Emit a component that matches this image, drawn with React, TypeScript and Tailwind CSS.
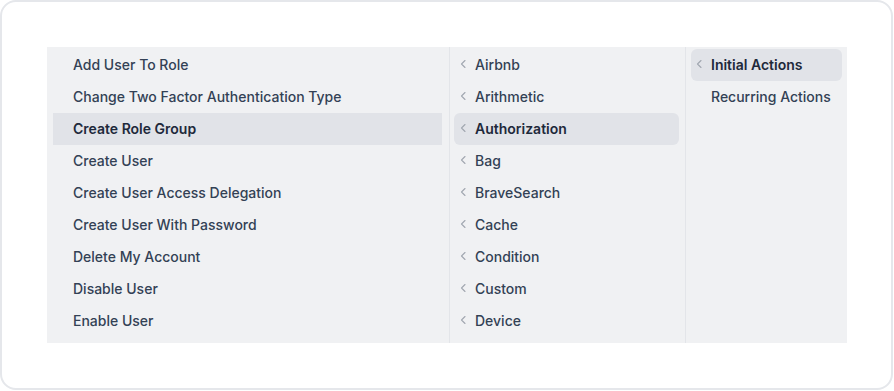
// Cascading action picker: three columns of menu items

const groups = [
  'Add User To Role',
  'Change Two Factor Authentication Type',
  'Create Role Group',
  'Create User',
  'Create User Access Delegation',
  'Create User With Password',
  'Delete My Account',
  'Disable User',
  'Enable User',
];

const integrations = [
  'Airbnb',
  'Arithmetic',
  'Authorization',
  'Bag',
  'BraveSearch',
  'Cache',
  'Condition',
  'Custom',
  'Device',
];

const triggers = [
  { label: 'Initial Actions', chevron: true },
  { label: 'Recurring Actions', chevron: false },
];

export default function App() {
  return (
    <div className="h-[391px] w-[894px] bg-white font-['Inter','Liberation_Sans',sans-serif]">
      <div className="h-[390px] w-[893px] rounded-2xl border-2 border-[#e5e7eb] p-[45px]">
        <div className="flex h-[296px] w-[800px] bg-[#f0f1f3]">
          {/* Actions */}
          <div className="w-[403px] border-r border-[#e3e5e9] pl-[6px] pr-[7px] pt-[2px]">
            {groups.map((name) => {
              const active = name === 'Create Role Group';
              return (
                <div
                  key={name}
                  className={`flex h-8 items-center pb-[2px] pl-5 text-[14px] ${
                    active ? 'bg-[#e1e3e8] font-semibold text-[#1e293b]' : 'font-medium text-[#334155]'
                  }`}
                >
                  {name}
                </div>
              );
            })}
          </div>

          {/* Integrations */}
          <div className="w-[236px] border-r border-[#e3e5e9] pl-[4px] pr-[6px] pt-[2px]">
            {integrations.map((name) => {
              const active = name === 'Authorization';
              return (
                <div
                  key={name}
                  className={`flex h-8 items-center gap-[5px] rounded-md pb-[2px] pl-[4px] text-[14px] ${
                    active ? 'bg-[#e1e3e8] font-semibold text-[#1e293b]' : 'font-medium text-[#334155]'
                  }`}
                >
                  <ChevronLeftIcon />
                  {name}
                </div>
              );
            })}
          </div>

          {/* Triggers */}
          <div className="flex-1 px-[5px] pt-[2px]">
            {triggers.map((t, i) => (
              <div
                key={t.label}
                className={`flex h-8 items-center gap-[5px] rounded-md pb-[2px] pl-[3px] text-[14px] ${
                  i === 0 ? 'bg-[#e1e3e8] font-semibold text-[#1e293b]' : 'font-medium text-[#334155]'
                }`}
              >
                {t.chevron ? <ChevronLeftIcon /> : <span className="w-3" />}
                {t.label}
              </div>
            ))}
          </div>
        </div>
      </div>
    </div>
  );
}

function ChevronLeftIcon() {
  return (
    <svg width="12" height="12" viewBox="0 0 12 12" fill="none" className="shrink-0">
      <path d="M7 2.5L3.5 6L7 9.5" stroke="#a1a7b0" strokeWidth="1.1" strokeLinecap="round" strokeLinejoin="round" />
    </svg>
  );
}
